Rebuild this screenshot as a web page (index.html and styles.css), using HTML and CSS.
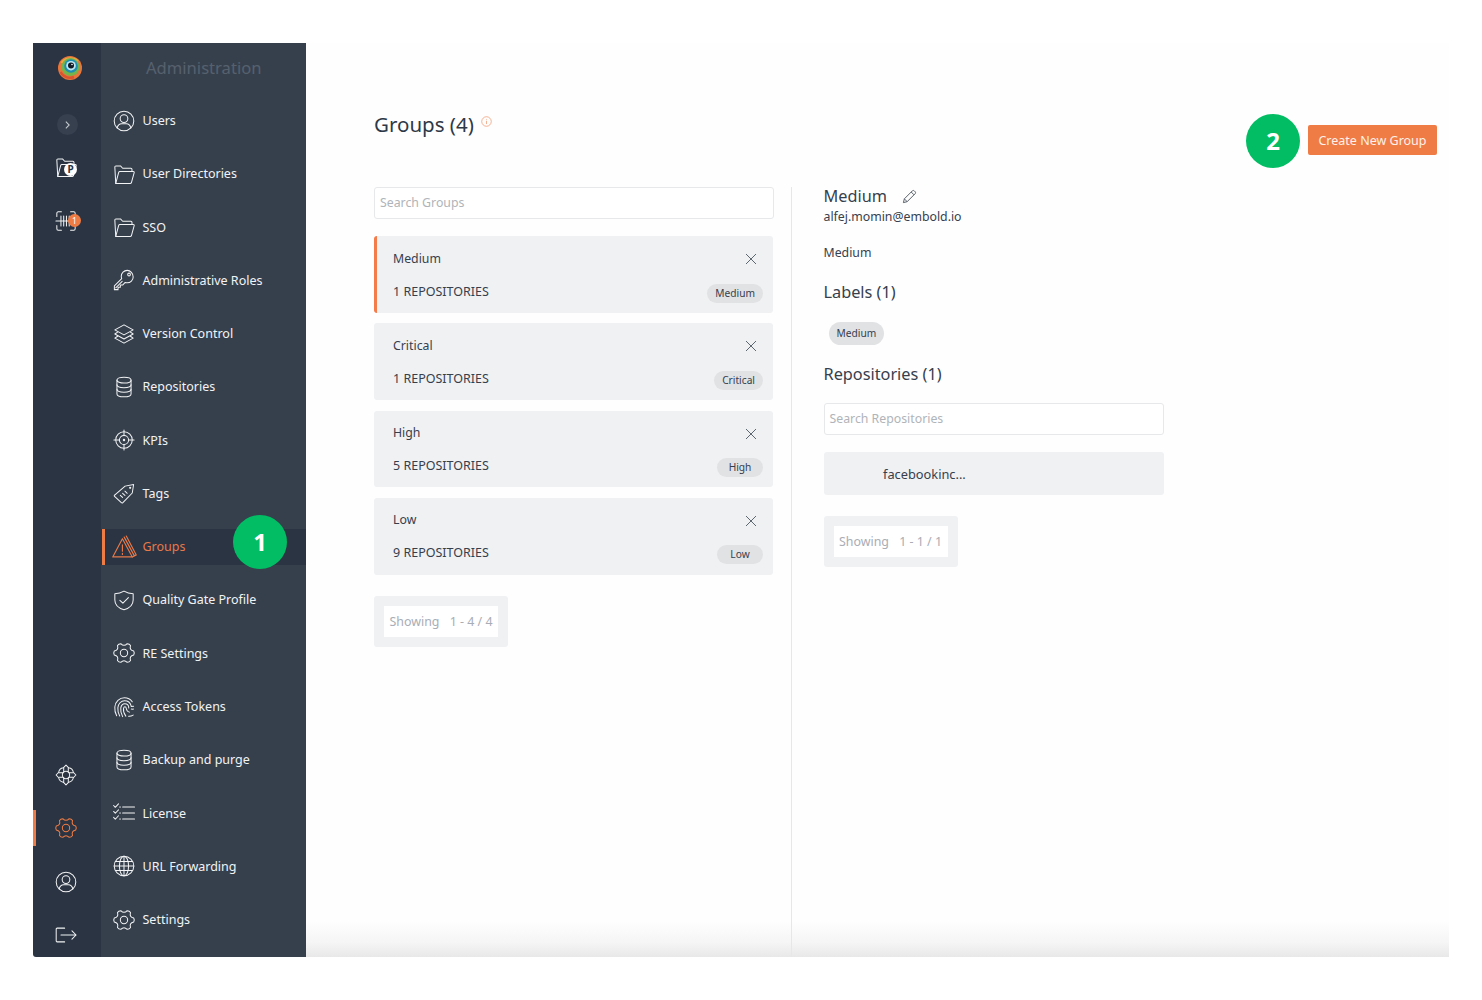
FILE: index.html
```html
<!DOCTYPE html>
<html lang="en">
<head>
<meta charset="utf-8">
<title>Groups</title>
<link rel="stylesheet" href="styles.css">
</head>
<body>
<svg class="defs" width="0" height="0" aria-hidden="true">
  <symbol id="i-user" viewBox="0 0 24 24"><circle cx="12" cy="12" r="10.700"/><circle cx="12" cy="9.400" r="4.200"/><path d="M4.600 19.600c.6-3.200 3-4.600 4.900-4.600h5c1.900 0 4.300 1.400 4.900 4.600"/></symbol>
  <symbol id="i-folder" viewBox="0 0 24 24"><path d="M3 22.300 2 4.500c0-.8.500-1.300 1.200-1.300h5l2.300 2.500h9c.7 0 1.200.500 1.200 1.200v2.300"/><path d="M3 22.300h15.800c.7 0 1.100-.4 1.300-1l3-10.800c.2-.7-.2-1.200-.9-1.200H7.500c-.7 0-1.100.400-1.300 1L3 22.300Z"/></symbol>
  <symbol id="i-key" viewBox="0 0 24 24"><path d="M15.500 1.500c-3.600 0-6.500 2.900-6.500 6.500 0 .9.200 1.700.5 2.500L1.500 18.500v4h4V20h2.500v-2.500h2.500l2.800-2.800c.8.300 1.400.400 2.200.400 3.600 0 6.500-2.900 6.500-6.500S19.100 1.500 15.500 1.500Z"/><circle cx="17.500" cy="6" r="1.500"/><path d="M3 20.500l7-7"/></symbol>
  <symbol id="i-layers" viewBox="0 0 24 24"><path d="M12 2 22 7.500 12 13 2 7.500 12 2Z"/><path d="M5 10 2 12 12 17.500 22 12 19 10"/><path d="M5 14.500 2 16.500 12 22 22 16.500 19 14.500"/></symbol>
  <symbol id="i-db" viewBox="0 0 24 24"><ellipse cx="12" cy="4.500" rx="7.700" ry="3.200"/><path d="M4.300 4.500v15c0 1.800 3.400 3.200 7.700 3.200s7.700-1.400 7.700-3.200v-15"/><path d="M4.300 9.500c0 1.800 3.400 3.200 7.700 3.200s7.700-1.400 7.700-3.200"/><path d="M4.300 14.500c0 1.800 3.400 3.200 7.700 3.200s7.700-1.400 7.700-3.200"/></symbol>
  <symbol id="i-target" viewBox="0 0 24 24"><circle cx="12" cy="12" r="9"/><circle cx="12" cy="12" r="5"/><circle class="solid" cx="12" cy="12" r="1.300"/><path d="M12 1v6M12 17v6M1 12h6M17 12h6"/></symbol>
  <symbol id="i-tag" viewBox="0 0 24 24"><path d="M1.800 14.200 13.200 4.500l9.300-1.800-1.500 9.300L10.800 22.500c-.5.500-1.200.500-1.700 0l-7.400-6.700c-.5-.5-.4-1.200.1-1.600Z"/><circle class="solid" cx="18.700" cy="6.300" r="1.200"/><path d="M8 14.500l2.500 2.300M10.500 12.300l2.500 2.300M13 10l2.500 2.300"/></symbol>
  <symbol id="i-groups" viewBox="0 0 24 24"><path d="M10 4.500 19.500 22H.700L10 4.500Z"/><path d="M10 10.500v6M10 18.500v1.200"/><path d="M11.700 3 21.500 21 19.500 22M13.700 2 23.300 20.200 21.500 21"/></symbol>
  <symbol id="i-shield" viewBox="0 0 24 24"><path d="M12 2.300c3 1.900 6.600 2.800 10 2.800v7c0 5-4 8.900-10 10.600-6-1.700-10-5.600-10-10.600v-7c3.400 0 7-.9 10-2.800Z"/><path d="M7.500 12.300l3.300 3.200 6-6.200"/></symbol>
  <symbol id="i-gear" viewBox="0 0 24 24"><path d="M22.600 9.940Q23.800 12 22.600 14.060Q17.630 15.250 19.090 20.150Q17.900 22.220 15.520 22.210Q12 18.500 8.480 22.210Q6.100 22.220 4.910 20.150Q6.370 15.250 1.400 14.060Q.2 12 1.400 9.940Q6.370 8.750 4.910 3.850Q6.100 1.780 8.480 1.790Q12 5.500 15.520 1.790Q17.900 1.780 19.090 3.850Q17.630 8.750 22.600 9.940Z"/><circle cx="12" cy="12" r="4"/></symbol>
  <symbol id="i-print" viewBox="0 0 24 24"><path d="M4 21.500C2.300 18.500 1.700 15.500 2 12 2.500 6.300 7 2 12.500 2c3.500 0 6.500 1.600 8.500 4.300"/><path d="M7.300 21.800C5.800 19 5 16 5.300 12.800 5.700 8.500 8.700 5.200 12.600 5.200c3.500 0 6.300 2.200 7.200 5.500"/><path d="M10.500 22.500C8.800 19.300 8 16.500 8.500 13c.4-2.500 2-4.600 4.300-4.600 2.600 0 4.400 2 4.400 4.600"/><path d="M14 22c-2-2.700-3-5.700-2.500-8.500.2-1 .7-1.900 1.500-1.900 1.100 0 1.400 1 1.500 2 .3 2 1.500 3.500 3.500 4"/><path d="M17 22c1.500.1 3.500-.3 5-1.200M20 14.300c.8.200 1.500.2 2.300 0M19.800 11.500l2.700-.3"/></symbol>
  <symbol id="i-list" viewBox="0 0 24 24"><path d="M10.500 5.500h13M10.500 12h13M10.500 18.500h13"/><path d="M.7 3.800l1.800 2L6 2M.7 10.300l1.800 2L6 8.500M.7 16.800l1.800 2L6 15"/><path d="M7.300 5.500h.8M7.300 12h.8M7.300 18.500h.8"/></symbol>
  <symbol id="i-globe" viewBox="0 0 24 24"><circle cx="12" cy="12" r="10.700"/><ellipse cx="12" cy="12" rx="5" ry="10.700"/><path d="M12 1.300v21.400M1.300 12h21.400M2.800 7h18.400M2.800 17h18.400"/></symbol>
  <symbol id="i-buoy" viewBox="0 0 24 24"><path d="M12 1.200 15 4.200C18 4.800 19.500 6.500 20 9L22.800 12 20 15C19.500 17.500 18 19.200 15 19.800L12 22.800 9 19.800C6 19.200 4.500 17.500 4 15L1.200 12 4 9C4.500 6.500 6 4.800 9 4.200L12 1.200Z"/><circle cx="12" cy="12" r="4"/><path d="M9.500 4.200V9M14.500 4.200V9M9.500 15v4.800M14.500 15v4.800M4.200 9.500H9M4.200 14.500H9M15 9.500h4.800M15 14.500h4.800"/></symbol>
  <symbol id="i-out" viewBox="0 0 24 24"><path d="M10.500 4.500H2.300c-.6 0-1 .4-1 1v13c0 .6.400 1 1 1h8.200"/><path d="M6.500 12h16.500M18.500 7.500 23 12l-4.500 4.500"/></symbol>
</svg>

<div class="frame">
  <nav class="rail">
    <svg class="logo" viewBox="0 0 24 24">
      <circle class="logo-a" cx="12" cy="12" r="12"/>
      <path class="logo-b" d="M2.500 16C5 21 11 23 16 21"/>
      <path class="logo-c" d="M3.500 7C6 2 15 .5 20 5"/>
      <circle class="logo-d" cx="12.500" cy="11" r="9"/>
      <circle class="logo-e" cx="13" cy="10" r="6.800"/>
      <circle class="logo-f" cx="13" cy="9.700" r="4.800"/>
      <circle class="logo-g" cx="13" cy="9.500" r="3"/>
      <circle class="logo-h" cx="14" cy="8.500" r=".8"/>
    </svg>
    <div class="toggle"><svg class="chev" viewBox="0 0 8 12"><path d="M2 2l4 4-4 4"/></svg></div>
    <div class="rail-item rail-folder">
      <svg class="icon rail-icon"><use href="#i-folder"/></svg>
      <span class="p-badge">P</span>
    </div>
    <div class="rail-item rail-scan">
      <svg class="icon rail-icon" viewBox="0 0 24 24"><path d="M2 7V3.500C2 2.700 2.700 2 3.500 2H7M17 2h3.500c.8 0 1.500.7 1.500 1.500V7M2 17v3.500c0 .8.700 1.500 1.500 1.500H7M17 22h3.500c.8 0 1.500-.7 1.500-1.500V17M1 12h22M6.500 6.500v11M9.500 6.500v11M12.500 6.500v11M15.500 6.500v11"/></svg>
      <span class="n-badge">1</span>
    </div>
    <div class="rail-bottom">
      <div class="rail-row"><svg class="icon rail-icon"><use href="#i-buoy"/></svg></div>
      <div class="rail-row is-active"><svg class="icon rail-icon"><use href="#i-gear"/></svg></div>
      <div class="rail-row"><svg class="icon rail-icon"><use href="#i-user"/></svg></div>
      <div class="rail-row"><svg class="icon rail-icon"><use href="#i-out"/></svg></div>
    </div>
  </nav>

  <aside class="menu">
    <div class="menu-title">Administration</div>
    <ul class="menu-list">
      <li class="menu-item"><svg class="icon"><use href="#i-user"/></svg><span>Users</span></li>
      <li class="menu-item"><svg class="icon"><use href="#i-folder"/></svg><span>User Directories</span></li>
      <li class="menu-item"><svg class="icon"><use href="#i-folder"/></svg><span>SSO</span></li>
      <li class="menu-item"><svg class="icon"><use href="#i-key"/></svg><span>Administrative Roles</span></li>
      <li class="menu-item"><svg class="icon"><use href="#i-layers"/></svg><span>Version Control</span></li>
      <li class="menu-item"><svg class="icon"><use href="#i-db"/></svg><span>Repositories</span></li>
      <li class="menu-item"><svg class="icon"><use href="#i-target"/></svg><span>KPIs</span></li>
      <li class="menu-item"><svg class="icon"><use href="#i-tag"/></svg><span>Tags</span></li>
      <li class="menu-item is-active"><svg class="icon icon-lg"><use href="#i-groups"/></svg><span>Groups</span><b class="step step-one">1</b></li>
      <li class="menu-item"><svg class="icon"><use href="#i-shield"/></svg><span>Quality Gate Profile</span></li>
      <li class="menu-item"><svg class="icon"><use href="#i-gear"/></svg><span>RE Settings</span></li>
      <li class="menu-item"><svg class="icon"><use href="#i-print"/></svg><span>Access Tokens</span></li>
      <li class="menu-item"><svg class="icon"><use href="#i-db"/></svg><span>Backup and purge</span></li>
      <li class="menu-item"><svg class="icon"><use href="#i-list"/></svg><span>License</span></li>
      <li class="menu-item"><svg class="icon"><use href="#i-globe"/></svg><span>URL Forwarding</span></li>
      <li class="menu-item"><svg class="icon"><use href="#i-gear"/></svg><span>Settings</span></li>
    </ul>
  </aside>

  <main class="main">
    <header class="top">
      <div class="title-wrap">
        <h1 class="title">Groups (4)</h1>
        <svg class="info" viewBox="0 0 12 12"><circle cx="6" cy="6" r="5.200"/><path d="M6 3.200v.8M6 5.200v3.600"/></svg>
      </div>
      <div class="top-action">
        <b class="step step-two">2</b>
        <button class="primary">Create New Group</button>
      </div>
    </header>

    <div class="columns">
      <section class="col-left">
        <div class="search">Search Groups</div>
        <div class="cards">
          <article class="card is-selected">
            <div class="card-row"><span class="card-name">Medium</span><svg class="close" viewBox="0 0 12 12"><path d="M1 1l10 10M11 1 1 11"/></svg></div>
            <div class="card-row card-row-low"><span>1 REPOSITORIES</span><span class="chip">Medium</span></div>
          </article>
          <article class="card">
            <div class="card-row"><span class="card-name">Critical</span><svg class="close" viewBox="0 0 12 12"><path d="M1 1l10 10M11 1 1 11"/></svg></div>
            <div class="card-row card-row-low"><span>1 REPOSITORIES</span><span class="chip">Critical</span></div>
          </article>
          <article class="card">
            <div class="card-row"><span class="card-name">High</span><svg class="close" viewBox="0 0 12 12"><path d="M1 1l10 10M11 1 1 11"/></svg></div>
            <div class="card-row card-row-low"><span>5 REPOSITORIES</span><span class="chip">High</span></div>
          </article>
          <article class="card">
            <div class="card-row"><span class="card-name">Low</span><svg class="close" viewBox="0 0 12 12"><path d="M1 1l10 10M11 1 1 11"/></svg></div>
            <div class="card-row card-row-low"><span>9 REPOSITORIES</span><span class="chip">Low</span></div>
          </article>
        </div>
        <div class="pager pager-left"><span class="pager-in"><span>Showing</span><span>1 - 4 / 4</span></span></div>
      </section>

      <section class="col-right">
        <div class="detail-head">
          <h2 class="h2">Medium</h2>
          <svg class="pencil" viewBox="0 0 16 16"><path d="M1.500 14.500l1-4L11 2c.6-.6 1.500-.6 2.100 0l.9.900c.6.600.6 1.500 0 2.100l-8.500 8.500-4 1Z"/><path d="M2.500 10.500l3 3M9.800 3.200l3 3"/></svg>
        </div>
        <div class="email">alfej.momin@embold.io</div>
        <div class="desc">Medium</div>
        <h2 class="h2 labels-h">Labels (1)</h2>
        <div class="labels"><span class="chip chip-lg">Medium</span></div>
        <h2 class="h2 repos-h">Repositories (1)</h2>
        <div class="search search-repo">Search Repositories</div>
        <div class="repo">facebookinc...</div>
        <div class="pager pager-right"><span class="pager-in"><span>Showing</span><span>1 - 1 / 1</span></span></div>
      </section>
    </div>
  </main>
</div>
</body>
</html>
```

FILE: styles.css
```css
* { box-sizing: border-box; }
html, body { margin: 0; padding: 0; background: #fff; }
body { font-family: "Noto Sans", "Open Sans", sans-serif; color: #36404d; height: 1000px; overflow: hidden; }
ul { list-style: none; margin: 0; padding: 0; }
h1, h2 { margin: 0; font-weight: 400; }
.defs { position: absolute; }

.frame { display: flex; width: 1416px; height: 914px; margin: 43px 33px; }

/* icons */
.icon { width: 22px; height: 22px; fill: none; stroke: currentColor; stroke-width: 1.1; stroke-linecap: round; stroke-linejoin: round; flex: none; overflow: visible; }
.icon-lg { width: 25px; height: 25px; margin: 0 -2px 0 -1px; }
.solid { fill: currentColor; stroke: none; }
symbol { overflow: visible; }

/* rail */
.rail { width: 68px; flex: none; background: #2b3442; color: #f2f3f4; display: flex; flex-direction: column; align-items: center; padding-top: 13px; border-bottom-left-radius: 3px; }
.logo { width: 24px; height: 24px; margin-left: 5px; flex: none; }
.logo-a { fill: #e8763a; }
.logo-b { fill: none; stroke: #d9542f; stroke-width: 2.500; }
.logo-c { fill: none; stroke: #e9a93f; stroke-width: 2; }
.logo-d { fill: #74b44a; }
.logo-e { fill: #1f8fb3; }
.logo-f { fill: #bfe7ef; }
.logo-g { fill: #101a24; }
.logo-h { fill: #fff; }
.toggle { width: 21px; height: 21px; margin-top: 34px; border-radius: 50%; background: #36404f; display: flex; align-items: center; justify-content: center; }
.chev { width: 7px; height: 10px; fill: none; stroke: #c3c8ce; stroke-width: 1.300; }
.rail-item { position: relative; height: 22px; margin-left: -2px; }
.rail-folder { margin-top: 21px; }
.rail-scan { margin-top: 32px; }
.p-badge { position: absolute; right: 0; bottom: 2px; width: 13px; height: 13px; border-radius: 50%; background: #fff; color: #2b3442; font-size: 10px; font-weight: 700; line-height: 13px; text-align: center; }
.n-badge { position: absolute; right: -4px; top: 4px; width: 13px; height: 13px; border-radius: 50%; background: #f07c45; color: #fff; font-size: 8.500px; line-height: 13px; text-align: center; }
.rail-bottom { margin-top: auto; margin-bottom: -4.500px; width: 100%; }
.rail-row { height: 53.300px; display: flex; align-items: center; justify-content: center; position: relative; padding-right: 2px; }
.rail-row.is-active { color: #f07c45; }
.rail-row.is-active::before { content: ""; position: absolute; left: 0; top: 8px; width: 3px; height: 36px; background: #f07c45; }

/* menu */
.menu { width: 205px; flex: none; background: #36404d; color: #f2f3f4; display: flex; flex-direction: column; }
.menu-title { height: 59.600px; padding: 12px 0 0 45px; font-size: 16.600px; line-height: 26px; color: #57616d; }
.menu-list { display: flex; flex-direction: column; gap: 17.270px; }
.menu-item { height: 36px; display: flex; align-items: center; gap: 8px; padding-left: 11.500px; font-size: 12.500px; position: relative; }
.menu-item.is-active { background: #2b3442; color: #e8794a; }
.menu-item.is-active::before { content: ""; position: absolute; left: 1px; top: 0; bottom: 0; width: 3px; background: #f07c45; }
.step { position: absolute; width: 54px; height: 54px; border-radius: 50%; background: #02bd63; color: #fff; font: 700 24px/54px "Noto Sans", sans-serif; text-align: center; }
.step-one { left: 132px; top: -14px; }
.step-two { left: -62px; top: -11px; }

/* main */
.main { flex: 1; display: flex; flex-direction: column; background: linear-gradient(to bottom, rgba(232,232,232,0), rgba(232,232,232,.4) 60%, #e8e8e8) bottom / 100% 36px no-repeat #fefefe; min-width: 0; }
.top { height: 144px; padding: 0 12px 0 68px; display: flex; justify-content: space-between; align-items: flex-start; }
.title-wrap { display: flex; align-items: flex-start; margin-top: 65px; }
.title { font-size: 20.500px; line-height: 32px; color: #2e3947; }
.info { width: 11px; height: 11px; margin: 8px 0 0 7px; fill: none; stroke: #f3a27c; stroke-width: .9; }
.top-action { position: relative; margin-top: 82px; }
.primary { display: block; width: 129px; height: 30px; border: 0; border-radius: 2px; background: #f07c45; color: #fdf1ea; font: 12.500px/30px "Noto Sans", sans-serif; padding: 1px 0 0; }

.columns { flex: 1; display: flex; min-height: 0; }
.col-left { width: 486px; padding: 0 17px 0 68px; border-right: 1px solid #e7e7e9; flex: none; }
.col-right { width: 372px; padding-left: 31.500px; flex: none; }

.search { height: 32px; border: 1px solid #e7e8ea; border-radius: 3px; background: #fff; padding-left: 5px; font-size: 12.300px; line-height: 30px; color: #b0b4b9; }
.cards { margin-top: 17px; width: 399px; display: flex; flex-direction: column; gap: 10.630px; }
.card { height: 76.700px; background: #f0f1f3; border-radius: 3px; padding: 11px 10px 0 19px; font-size: 12.500px; color: #36404d; }
.card.is-selected { border-left: 3px solid #f37c4a; padding-left: 16px; }
.card-name { font-size: 12.300px; }
.card-row { display: flex; justify-content: space-between; align-items: center; height: 22px; }
.card-row-low { margin-top: 11px; }
.close { width: 12px; height: 12px; margin-right: 6px; fill: none; stroke: #4d5661; stroke-width: .9; position: relative; top: 1px; }
.chip { display: inline-block; min-width: 46px; height: 19px; padding: 0 8px; border-radius: 10px; background: #e1e2e4; font-size: 10.200px; line-height: 19px; color: #36404d; text-align: center; position: relative; top: 2px; }

.pager { display: inline-flex; background: #f0f1f3; border-radius: 3px; padding: 10px; height: 51px; width: 134px; }
.pager-left { margin-top: 21px; }
.pager-right { margin-top: 21px; }
.pager-in { display: flex; justify-content: space-between; width: 100%; background: #fff; padding: 0 5.500px; font-size: 12.400px; line-height: 31px; color: #a9adb5; }

.detail-head { display: flex; align-items: center; gap: 15px; height: 20px; padding-bottom: 2px; }
.h2 { font-size: 16.300px; line-height: 24px; color: #36404d; }
.pencil { width: 15px; height: 15px; fill: none; stroke: #4d5661; stroke-width: 1; }
.email { margin-top: 1px; font-size: 12.300px; line-height: 18px; color: #36404d; }
.desc { margin-top: 18px; font-size: 12.300px; line-height: 18px; color: #36404d; }
.labels-h { margin-top: 18px; }
.labels { margin-top: 16px; padding-left: 5px; height: 23px; }
.chip-lg { height: 23px; padding: 0 8px; border-radius: 12px; line-height: 23px; top: 0; }
.repos-h { margin-top: 19px; }
.search-repo { margin-top: 17px; width: 340.500px; }
.repo { margin-top: 17px; width: 340.500px; height: 43px; background: #f0f1f3; border-radius: 3px; padding-left: 59.500px; font-size: 12.800px; line-height: 45px; color: #36404d; }
```
